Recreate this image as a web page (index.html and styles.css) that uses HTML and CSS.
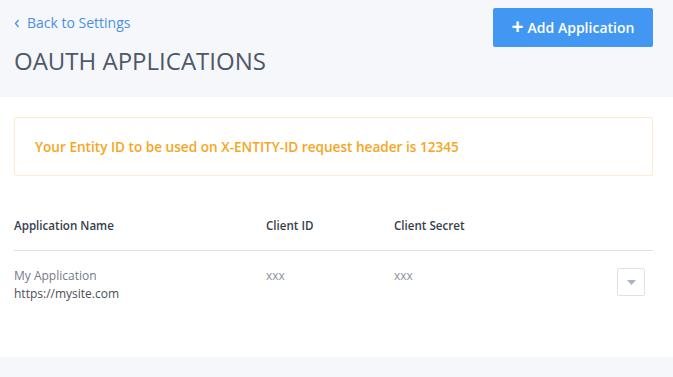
FILE: index.html
```html
<!DOCTYPE html>
<html>
<head>
<meta charset="utf-8">
<link rel="stylesheet" href="styles.css">
</head>
<body>
<header class="page-header">
  <div class="header-left">
    <a class="back-link" href="#"><svg class="chev" width="6" height="9" viewBox="0 0 6 9"><path d="M4.5 1 L1.5 4.5 L4.5 8" fill="none" stroke="#4a90e2" stroke-width="1.3"/></svg>Back to Settings</a>
    <h1 class="title">OAUTH APPLICATIONS</h1>
  </div>
  <button class="add-btn"><span class="plus">+</span>Add Application</button>
</header>
<main class="panel">
  <div class="alert">Your Entity ID to be used on X-ENTITY-ID request header is 12345</div>
  <div class="table">
    <div class="row head">
      <div class="c-name">Application Name</div>
      <div class="c-id">Client ID</div>
      <div class="c-secret">Client Secret</div>
      <div class="c-act"></div>
    </div>
    <div class="row body">
      <div class="c-name"><div class="app-name">My Application</div><div class="app-url">https://mysite.com</div></div>
      <div class="c-id val">xxx</div>
      <div class="c-secret val">xxx</div>
      <div class="c-act"><button class="drop"><svg width="9" height="5" viewBox="0 0 9 5"><path d="M0 0 H9 L4.5 5 Z" fill="#a9b4c4"/></svg></button></div>
    </div>
  </div>
</main>
</body>
</html>
```
FILE: styles.css
```css
* { box-sizing: border-box; }
html, body { margin: 0; padding: 0; }
body {
  background: #f6f7fb;
  font-family: "Open Sans", "Liberation Sans", sans-serif;
  width: 673px;
  height: 377px;
  overflow: hidden;
}
.page-header {
  height: 97px;
  display: flex;
  justify-content: space-between;
  align-items: flex-start;
  padding: 8px 20px 0 14px;
}
.header-left { display: flex; flex-direction: column; }
.back-link {
  display: flex;
  align-items: center;
  gap: 7px;
  margin-top: 5px;
  margin-left: 0;
  color: #4a90e2;
  font-size: 14px;
  line-height: 20px;
  text-decoration: none;
}
.chev { display: block; }
.title {
  margin: 12px 0 0 0;
  font-size: 24px;
  line-height: 32px;
  font-weight: 400;
  color: #4d5868;
  letter-spacing: 0;
}
.add-btn {
  width: 160px;
  height: 39px;
  border: none;
  border-radius: 2px;
  background: #4297f2;
  color: #fff;
  font-family: inherit;
  font-size: 14px;
  font-weight: 600;
  display: flex;
  align-items: center;
  justify-content: center;
  gap: 4px;
  padding: 0;
}
.plus { font-size: 21px; font-weight: 700; line-height: 1; margin-top: -2px; }
.panel {
  background: #fff;
  height: 260px;
  padding: 20px 20px 0 14px;
}
.alert {
  height: 59px;
  border: 1px solid #fcecce;
  border-radius: 2px;
  display: flex;
  align-items: center;
  padding-left: 20px;
  color: #f5a623;
  font-size: 13.6px;
  font-weight: 600;
}
.table { margin-top: 31px; }
.row { display: flex; }
.row.head {
  height: 44px;
  border-bottom: 1px solid #d9e1ec;
  font-size: 11.6px;
  font-weight: 600;
  color: #353e4c;
  padding-top: 11px;
}
.c-name { width: 252px; }
.c-id { width: 128px; }
.c-secret { flex: 1; }
.c-act { width: 36px; display: flex; justify-content: flex-start; }
.row.body { padding-top: 16px; font-size: 12px; line-height: 18px; }
.app-name { color: #737b88; }
.app-url { color: #4a4f57; }
.val { color: #8a929e; }
.drop {
  width: 28px;
  height: 28px;
  margin-top: 1px;
  border: 1px solid #dbe2ec;
  border-radius: 2px;
  background: #fff;
  display: flex;
  align-items: center;
  justify-content: center;
  padding: 0;
}
```
